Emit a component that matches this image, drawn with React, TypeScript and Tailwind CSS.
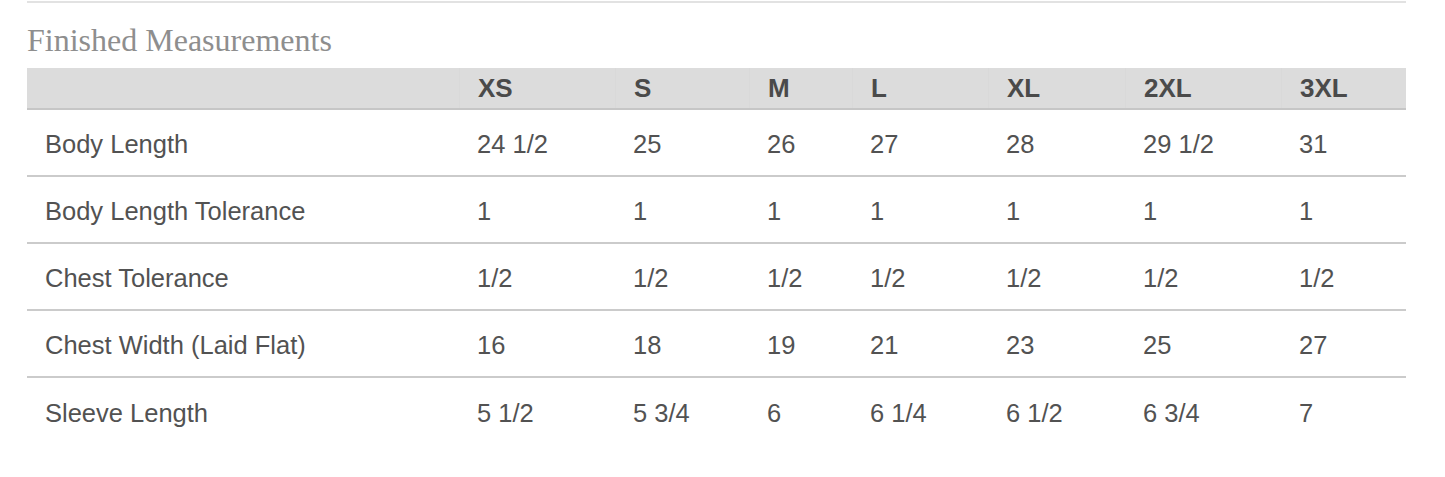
const sizes = ["XS", "S", "M", "L", "XL", "2XL", "3XL"];

const rows: { label: string; values: string[] }[] = [
  { label: "Body Length", values: ["24 1/2", "25", "26", "27", "28", "29 1/2", "31"] },
  { label: "Body Length Tolerance", values: ["1", "1", "1", "1", "1", "1", "1"] },
  { label: "Chest Tolerance", values: ["1/2", "1/2", "1/2", "1/2", "1/2", "1/2", "1/2"] },
  { label: "Chest Width (Laid Flat)", values: ["16", "18", "19", "21", "23", "25", "27"] },
  { label: "Sleeve Length", values: ["5 1/2", "5 3/4", "6", "6 1/4", "6 1/2", "6 3/4", "7"] },
];

// column widths measured off the layout
const cols = "grid grid-cols-[432px_156px_134px_103px_136px_137px_156px_125px]";

export default function App() {
  return (
    <div className="min-h-screen bg-white">
      <div className="ml-[27px] w-[1379px] pt-[1px]">
        <div className="border-t-2 border-[#e2e2e2]" />

        <h2 className="mt-[21px] mb-[11px] text-[32px] leading-[33px] text-[#8e8e8e] font-['Liberation_Serif','Times_New_Roman',serif]">
          Finished Measurements
        </h2>

        <div className="font-['Liberation_Sans',Arial,sans-serif]">
          {/* Header */}
          <div className={`${cols} h-[42px] bg-[#dcdcdc] border-b-2 border-[#c6c6c6]`}>
            <div />
            {sizes.map((s) => (
              <div
                key={s}
                className="flex items-center pl-[18px] border-l border-[#d9d9d9] text-[26px] font-bold text-[#4a4a4a]"
              >
                {s}
              </div>
            ))}
          </div>

          {/* Body rows */}
          {rows.map((row, idx) => (
            <div
              key={row.label}
              className={`${cols} h-[67px] pt-[3px] text-[25.5px] text-[#525252] ${
                idx < rows.length - 1 ? "border-b-2 border-[#cbcbcb]" : ""
              }`}
            >
              <div className="flex items-center pl-[18px]">{row.label}</div>
              {row.values.map((v, i) => (
                <div key={i} className="flex items-center pl-[18px]">
                  {v}
                </div>
              ))}
            </div>
          ))}
        </div>
      </div>
    </div>
  );
}
